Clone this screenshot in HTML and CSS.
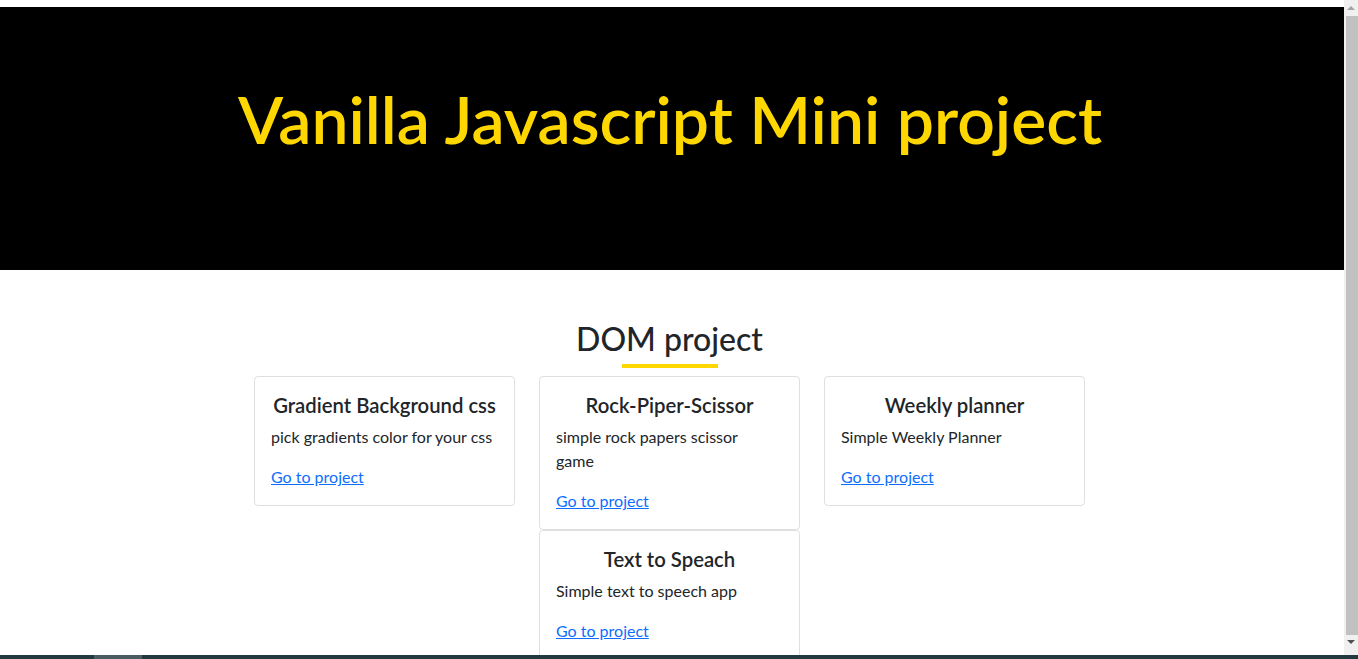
FILE: index.html
```html
<!DOCTYPE html>
<html lang="en">
<head>
<meta charset="utf-8">
<title>Vanilla Javascript Mini project</title>
<link rel="stylesheet" href="styles.css">
</head>
<body>
<div class="page">
<header class="hero">
  <h1 class="hero-title">Vanilla Javascript Mini project</h1>
</header>
<main class="content">
  <h2 class="section-title">DOM project</h2>
  <div class="cards">
    <div class="card">
      <h5 class="card-title">Gradient Background css</h5>
      <p class="card-text">pick gradients color for your css</p>
      <a class="card-link" href="#">Go to project</a>
    </div>
    <div class="card">
      <h5 class="card-title">Rock-Piper-Scissor</h5>
      <p class="card-text card-text-narrow">simple rock papers scissor game</p>
      <a class="card-link" href="#">Go to project</a>
    </div>
    <div class="card">
      <h5 class="card-title">Weekly planner</h5>
      <p class="card-text">Simple Weekly Planner</p>
      <a class="card-link" href="#">Go to project</a>
    </div>
    <div class="card">
      <h5 class="card-title">Text to Speach</h5>
      <p class="card-text">Simple text to speech app</p>
      <a class="card-link" href="#">Go to project</a>
    </div>
  </div>
</main>
</div>
<div class="scrollbar">
  <span class="sb-arrow sb-up"></span>
  <span class="sb-thumb"></span>
  <span class="sb-arrow sb-down"></span>
</div>
<div class="taskbar"><span class="taskbar-item"></span></div>
</body>
</html>
```

FILE: styles.css
```css
html, body {
  margin: 0;
  padding: 0;
}
body {
  font-family: Lato, "Open Sans", sans-serif;
  color: #212529;
  background: #fff;
}
.page {
  margin-right: 14px;
  padding-top: 7px;
}
.hero {
  background: #000;
  height: 263px;
  box-sizing: border-box;
  padding: 72px 4px 0 0;
  text-align: center;
}
.hero-title {
  margin: 0;
  color: #ffd700;
  font-size: 66px;
  font-weight: 600;
  line-height: 1.2;
}
.content {
  max-width: 1116px;
  margin: 0 auto;
  padding: 50px 17px 8px 12px;
}
.section-title {
  margin: 0 0 8px;
  text-align: center;
  font-size: 32px;
  font-weight: 500;
  line-height: 1.2;
}
.section-title::after {
  content: "";
  display: block;
  width: 96px;
  height: 4px;
  margin: 6px auto 0;
  background: #ffd700;
}
.cards {
  display: flex;
  flex-wrap: wrap;
  justify-content: center;
  align-items: flex-start;
}
.card {
  width: 261px;
  box-sizing: border-box;
  margin: 0 12px;
  padding: 16px;
  border: 1px solid rgba(0,0,0,.125);
  border-radius: 4px;
}
.card-title {
  margin: 0 0 8px;
  text-align: center;
  font-size: 20.3px;
  font-weight: 600;
  line-height: 24px;
}
.card-text {
  margin: 0 0 16px;
  font-size: 16px;
  line-height: 1.5;
}
.card-text-narrow {
  max-width: 215px;
}
.card-link {
  font-size: 16px;
  line-height: 1.5;
  color: #0d6efd;
}
.scrollbar {
  position: fixed;
  top: 0;
  right: 0;
  bottom: 0;
  width: 14px;
  background: #f0f0f0;
  display: flex;
  flex-direction: column;
  align-items: flex-end;
}
.sb-arrow {
  width: 14px;
  height: 16px;
  display: flex;
  justify-content: center;
  align-items: center;
}
.sb-up::before, .sb-down::before {
  content: "";
  width: 0;
  height: 0;
  border-left: 4px solid transparent;
  border-right: 4px solid transparent;
}
.sb-up::before {
  border-bottom: 4px solid #a3a3a3;
}
.sb-down {
  height: 20px;
  align-items: flex-start;
  padding-top: 5px;
  box-sizing: border-box;
}
.sb-down::before {
  border-top: 4px solid #505050;
}
.sb-thumb {
  width: 12px;
  height: 619px;
  background: #c1c1c1;
}
.taskbar {
  position: fixed;
  left: 0;
  right: 0;
  bottom: 0;
  height: 4px;
  background: #203a3f;
}
.taskbar-item {
  position: absolute;
  left: 94px;
  width: 48px;
  top: 0;
  bottom: 0;
  background: #4b5c60;
}
```
